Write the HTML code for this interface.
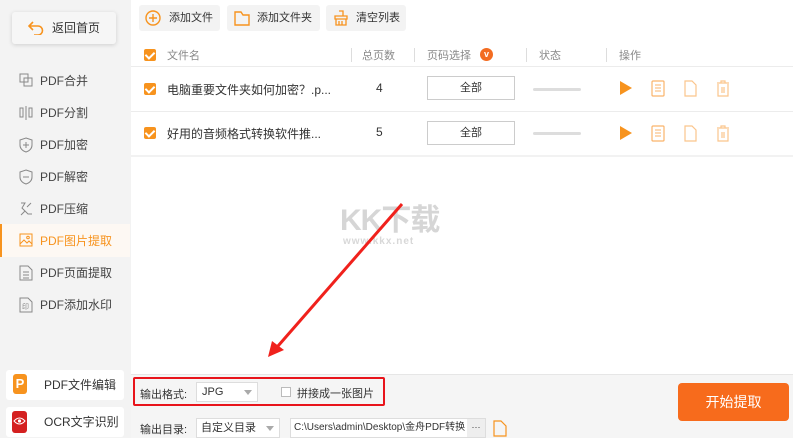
<!DOCTYPE html>
<html><head><meta charset="utf-8"><style>
*{margin:0;padding:0;box-sizing:border-box}
body{width:793px;height:438px;overflow:hidden;background:#fff;font-family:"Liberation Sans","Noto Sans CJK SC",sans-serif;font-size:12px;color:#333;position:relative}
.a{position:absolute}
.side{left:0;top:0;width:131px;height:438px;background:#f3f3f3}
.nav{left:0;width:130px;height:32px;line-height:32px;padding-left:40px;font-size:12px;color:#444}
.nav svg{position:absolute;left:19px;top:8px}
.tb{top:5px;height:26px;background:#f3f3f3;border-radius:3px;line-height:26px;font-size:11px;padding-left:30px;white-space:nowrap}
.cb{width:12px;height:12px;background:#f7931e;border-radius:2px}
.cb:after{content:"";position:absolute;left:3px;top:1px;width:4px;height:7px;border:solid #fff;border-width:0 2px 2px 0;transform:rotate(45deg)}
.hd{color:#888;font-size:11px;top:47px}
.sep{width:1px;height:14px;background:#ddd;top:48px}
.line{left:131px;width:662px;height:1px;background:#ececec}
.sel{width:88px;height:24px;border:1px solid #ccc;text-align:center;line-height:22px;font-size:11px}
.bar{width:48px;height:3px;background:#ddd;border-radius:2px}
</style></head><body>
<div class="a side"></div>
<div class="a" style="left:12px;top:12px;width:104px;height:32px;background:#f6f6f6;border-radius:3px;box-shadow:0 1px 4px rgba(0,0,0,.15);line-height:32px;padding-left:40px;font-size:12px">返回首页
<svg class="a" style="left:16px;top:9px" width="16" height="14" viewBox="0 0 16 14"><path d="M5 1L1 5l4 4M1 5h9a4.5 4.5 0 010 9H6" fill="none" stroke="#f7931e" stroke-width="1.6"/></svg></div>
<div class="a nav" style="top:65px"><svg width="14" height="14"><rect x="1" y="1" width="8" height="8" fill="none" stroke="#888"/><rect x="5" y="5" width="8" height="8" fill="none" stroke="#888"/></svg>PDF合并</div>
<div class="a nav" style="top:97px"><svg width="14" height="16"><rect x="1" y="3" width="3" height="9" fill="none" stroke="#888"/><rect x="10" y="3" width="3" height="9" fill="none" stroke="#888"/><path d="M7 1v14" stroke="#888"/></svg>PDF分割</div>
<div class="a nav" style="top:129px"><svg width="14" height="16"><path d="M7 1l6 2v5c0 4-3 6-6 7-3-1-6-3-6-7V3z M7 5v6M4 8h6" fill="none" stroke="#888"/></svg>PDF加密</div>
<div class="a nav" style="top:161px"><svg width="14" height="16"><path d="M7 1l6 2v5c0 4-3 6-6 7-3-1-6-3-6-7V3z M4 8h6" fill="none" stroke="#888"/></svg>PDF解密</div>
<div class="a nav" style="top:193px"><svg width="14" height="16"><path d="M2 2h4l-3 5 6 6h4M12 2l-4 4M2 14l4-4" fill="none" stroke="#888"/></svg>PDF压缩</div>
<div class="a" style="left:0;top:224px;width:130px;height:33px;background:#fdf8f3;border-left:2px solid #f7931e"></div>
<div class="a nav" style="top:225px;color:#f7931e"><svg width="14" height="14"><rect x="1" y="1" width="12" height="12" fill="none" stroke="#f7931e"/><path d="M1 11l4-4 3 3 2-2 3 3" fill="none" stroke="#f7931e"/><circle cx="9" cy="4.5" r="1.3" fill="none" stroke="#f7931e"/></svg>PDF图片提取</div>
<div class="a nav" style="top:257px"><svg width="14" height="16"><path d="M1 1h8l4 4v10H1z M4 7h6M4 10h6M4 13h6" fill="none" stroke="#888"/></svg>PDF页面提取</div>
<div class="a nav" style="top:289px"><svg width="14" height="16"><path d="M1 1h8l4 4v10H1z" fill="none" stroke="#888"/><text x="3" y="12" font-size="7" fill="#888">印</text></svg>PDF添加水印</div>
<div class="a" style="left:6px;top:370px;width:118px;height:30px;background:#fff;border-radius:3px;line-height:30px;padding-left:38px;font-size:12px">PDF文件编辑</div>
<div class="a" style="left:13px;top:374px;width:14px;height:20px;background:#f7931e;border-radius:3px;color:#fff;font-weight:bold;font-size:13px;text-align:center;line-height:20px">P</div>
<div class="a" style="left:6px;top:407px;width:118px;height:30px;background:#fff;border-radius:3px;line-height:30px;padding-left:38px;font-size:12px">OCR文字识别</div>
<div class="a" style="left:12px;top:411px;width:15px;height:22px;background:#d42020;border-radius:3px"></div>
<svg class="a" style="left:13px;top:416px" width="13" height="10"><path d="M1 5q5.5-6 11 0q-5.5 6-11 0z" fill="none" stroke="#fff"/><circle cx="6.5" cy="5" r="1.6" fill="#fff"/></svg>

<div class="a tb" style="left:139px;width:81px">添加文件<svg class="a" style="left:6px;top:5px" width="16" height="16"><circle cx="8" cy="8" r="7" fill="none" stroke="#f7931e" stroke-width="1.4"/><path d="M8 4v8M4 8h8" stroke="#f7931e" stroke-width="1.4"/></svg></div>
<div class="a tb" style="left:227px;width:93px">添加文件夹<svg class="a" style="left:7px;top:5px" width="16" height="16"><path d="M1 2h6l2 3h6v10H1z" fill="none" stroke="#f7931e" stroke-width="1.4"/></svg></div>
<div class="a tb" style="left:326px;width:80px">清空列表<svg class="a" style="left:7px;top:5px" width="16" height="16"><path d="M6 1h4v5M2 6h12v3H2zM3 9v6h10V9M6 11v4M9 11v4" fill="none" stroke="#f7931e" stroke-width="1.3"/></svg></div>

<div class="a cb" style="left:144px;top:49px"></div>
<div class="a hd" style="left:167px">文件名</div>
<div class="a sep" style="left:351px"></div><div class="a hd" style="left:362px">总页数</div>
<div class="a sep" style="left:414px"></div><div class="a hd" style="left:427px">页码选择</div>
<div class="a" style="left:480px;top:48px;width:13px;height:13px;border-radius:50%;background:#f36c21;color:#fff;font-size:9px;text-align:center;line-height:13px;font-weight:bold">v</div>
<div class="a sep" style="left:526px"></div><div class="a hd" style="left:539px">状态</div>
<div class="a sep" style="left:606px"></div><div class="a hd" style="left:619px">操作</div>
<div class="a line" style="top:66px"></div>
<div class="a line" style="top:111px"></div>
<div class="a line" style="top:155px;height:2px;background:#f2f2f2"></div>

<div class="a cb" style="left:144px;top:83px"></div>
<div class="a" style="left:167px;top:81px;font-size:12px">电脑重要文件夹如何加密？.p...</div>
<div class="a" style="left:376px;top:81px;font-size:12px">4</div>
<div class="a sel" style="left:427px;top:76px">全部</div>
<div class="a bar" style="left:533px;top:88px"></div>
<div class="a cb" style="left:144px;top:127px"></div>
<div class="a" style="left:167px;top:125px;font-size:12px">好用的音频格式转换软件推...</div>
<div class="a" style="left:376px;top:125px;font-size:12px">5</div>
<div class="a sel" style="left:427px;top:121px">全部</div>
<div class="a bar" style="left:533px;top:132px"></div>

<svg class="a" style="left:618px;top:79px" width="120" height="64">
<g id="r"><path d="M2 2l12 7-12 7z" fill="#f7931e"/><rect x="34" y="2" width="12" height="15" rx="1" fill="none" stroke="#f9b36b" stroke-width="1.2"/><path d="M37 6h6M37 9h6M37 12h6" stroke="#f9b36b"/><path d="M67 2h7l4 4v11H67z" fill="none" stroke="#fbc58c" stroke-width="1.2"/><path d="M99 4h12M103 4V2h4v2M100 5v12h10V5M104 8v6M106 8v6" fill="none" stroke="#fbc58c" stroke-width="1.2"/></g>
<use href="#r" y="45"/></svg>

<div class="a" style="left:340px;top:195px;font-size:30px;font-weight:bold;color:#d6d6d6;letter-spacing:-1px">KK下载</div>
<div class="a" style="left:343px;top:236px;font-size:10px;font-weight:bold;color:#d8d8d8;letter-spacing:1px">www.kkx.net</div>
<svg class="a" style="left:0;top:0" width="793" height="438"><path d="M402 204L278 346" stroke="#f0211c" stroke-width="3"/><path d="M268 357l4-16 12 9z" fill="#f0211c"/></svg>

<div class="a" style="left:131px;top:374px;width:662px;height:64px;background:#f5f5f5;border-top:1px solid #e6e6e6"></div>
<div class="a" style="left:133px;top:377px;width:252px;height:29px;border:2px solid #e8141b;border-radius:2px"></div>
<div class="a" style="left:140px;top:386px;font-size:11px">输出格式:</div>
<div class="a" style="left:196px;top:382px;width:62px;height:20px;background:#fff;border:1px solid #ddd;font-size:11px;line-height:18px;padding-left:5px">JPG<span class="a" style="right:5px;top:7px;border:4px solid transparent;border-top:5px solid #aaa"></span></div>
<div class="a" style="left:281px;top:387px;width:10px;height:10px;border:1px solid #bbb;background:#fff"></div>
<div class="a" style="left:297px;top:385px;font-size:11px">拼接成一张图片</div>
<div class="a" style="left:140px;top:421px;font-size:11px">输出目录:</div>
<div class="a" style="left:196px;top:418px;width:84px;height:20px;background:#fff;border:1px solid #ddd;font-size:11px;line-height:18px;padding-left:4px">自定义目录<span class="a" style="right:5px;top:7px;border:4px solid transparent;border-top:5px solid #aaa"></span></div>
<div class="a" style="left:290px;top:418px;width:196px;height:20px;background:#fff;border:1px solid #ddd;font-size:10px;line-height:18px;padding-left:3px;overflow:hidden;white-space:nowrap">C:\Users\admin\Desktop\金舟PDF转换</div>
<div class="a" style="left:467px;top:419px;width:18px;height:18px;background:#eee;font-size:9px;text-align:center;line-height:16px">···</div>
<svg class="a" style="left:493px;top:420px" width="14" height="17"><path d="M1 1h7l5 5v10H1z" fill="none" stroke="#f7931e" stroke-width="1.2"/></svg>
<div class="a" style="left:678px;top:383px;width:111px;height:38px;background:#f76b1c;border-radius:4px;color:#fff;font-size:14px;text-align:center;line-height:38px">开始提取</div>
</body></html>
